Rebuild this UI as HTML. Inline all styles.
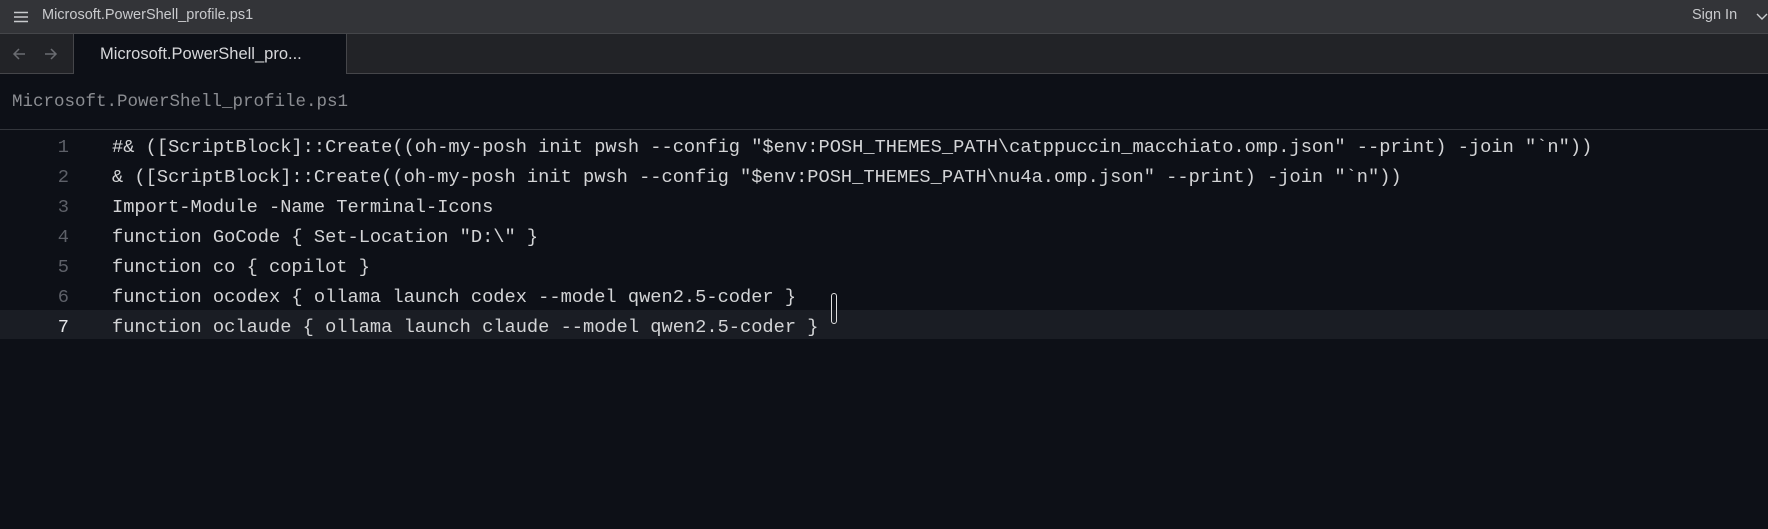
<!DOCTYPE html>
<html><head><meta charset="utf-8"><style>
*{margin:0;padding:0;box-sizing:border-box}
body{width:1768px;height:529px;background:#0d1017;overflow:hidden;font-family:"Liberation Sans",sans-serif;position:relative}
.top{position:absolute;left:0;top:0;width:1768px;height:34px;background:#333438;border-bottom:1px solid #45464a}
.top .t{position:absolute;left:42px;top:7px;font-size:14.5px;color:#c9cacd}
.top .s{position:absolute;left:1692px;top:7px;font-size:14.5px;color:#c9cacd}
.tabs{position:absolute;left:0;top:34px;width:1768px;height:40px;background:#222327;border-bottom:1px solid #45464a}
.tab{position:absolute;left:73px;top:34px;width:274px;height:40px;background:#0d1017;border-left:1px solid #45464a;border-right:1px solid #45464a}
.tab span{position:absolute;left:26px;top:11px;font-size:16.5px;color:#d6d7da}
.hdr{position:absolute;left:12px;top:92px;font-family:"Liberation Mono",monospace;font-size:17.5px;color:#8b8d92}
.sep{position:absolute;left:0;top:129px;width:1768px;height:1px;background:#33363c}
.hl{position:absolute;left:0;top:310px;width:1768px;height:29px;background:#1a1d24}
.code{position:absolute;left:0;top:132px;font-family:"Liberation Mono",monospace;font-size:18.7px;color:#d3d4d6}
.ln{position:absolute;height:30px;line-height:30px;white-space:pre}
.n{position:absolute;width:69px;text-align:right;left:0;color:#5d6068}
.c{position:absolute;left:112px}
.cur{position:absolute;left:831px;top:293px;width:6px;height:31px;border:1.5px solid #e0e0e0;border-radius:3px}
</style></head><body>
<div class="top">
<svg style="position:absolute;left:14px;top:11px" width="14" height="12"><path d="M0 1.5h14M0 6h14M0 10.5h14" stroke="#c9cacd" stroke-width="1.6"/></svg>
<span class="t">Microsoft.PowerShell_profile.ps1</span>
<span class="s">Sign In</span>
<svg style="position:absolute;left:1756px;top:13px" width="12" height="8"><path d="M1 1l5 5 5-5" stroke="#c9cacd" stroke-width="1.4" fill="none"/></svg>
</div>
<div class="tabs">
<svg style="position:absolute;left:12px;top:13px" width="14" height="14"><path d="M13 7H2M7 2L2 7l5 5" stroke="#6b6d72" stroke-width="1.5" fill="none"/></svg>
<svg style="position:absolute;left:44px;top:13px" width="14" height="14"><path d="M1 7h11M7 2l5 5-5 5" stroke="#6b6d72" stroke-width="1.5" fill="none"/></svg>
</div>
<div class="tab"><span>Microsoft.PowerShell_pro...</span></div>
<div class="hdr">Microsoft.PowerShell_profile.ps1</div>
<div class="sep"></div>
<div class="hl"></div>
<div class="code">
<div class="ln" style="top:0"><span class="n">1</span><span class="c">#&amp; ([ScriptBlock]::Create((oh-my-posh init pwsh --config "$env:POSH_THEMES_PATH\catppuccin_macchiato.omp.json" --print) -join "`n"))</span></div>
<div class="ln" style="top:30px"><span class="n">2</span><span class="c">&amp; ([ScriptBlock]::Create((oh-my-posh init pwsh --config "$env:POSH_THEMES_PATH\nu4a.omp.json" --print) -join "`n"))</span></div>
<div class="ln" style="top:60px"><span class="n">3</span><span class="c">Import-Module -Name Terminal-Icons</span></div>
<div class="ln" style="top:90px"><span class="n">4</span><span class="c">function GoCode { Set-Location "D:\" }</span></div>
<div class="ln" style="top:120px"><span class="n">5</span><span class="c">function co { copilot }</span></div>
<div class="ln" style="top:150px"><span class="n">6</span><span class="c">function ocodex { ollama launch codex --model qwen2.5-coder }</span></div>
<div class="ln" style="top:180px"><span class="n" style="color:#e6e7e9">7</span><span class="c">function oclaude { ollama launch claude --model qwen2.5-coder }</span></div>
</div>
<div class="cur"></div>
</body></html>
